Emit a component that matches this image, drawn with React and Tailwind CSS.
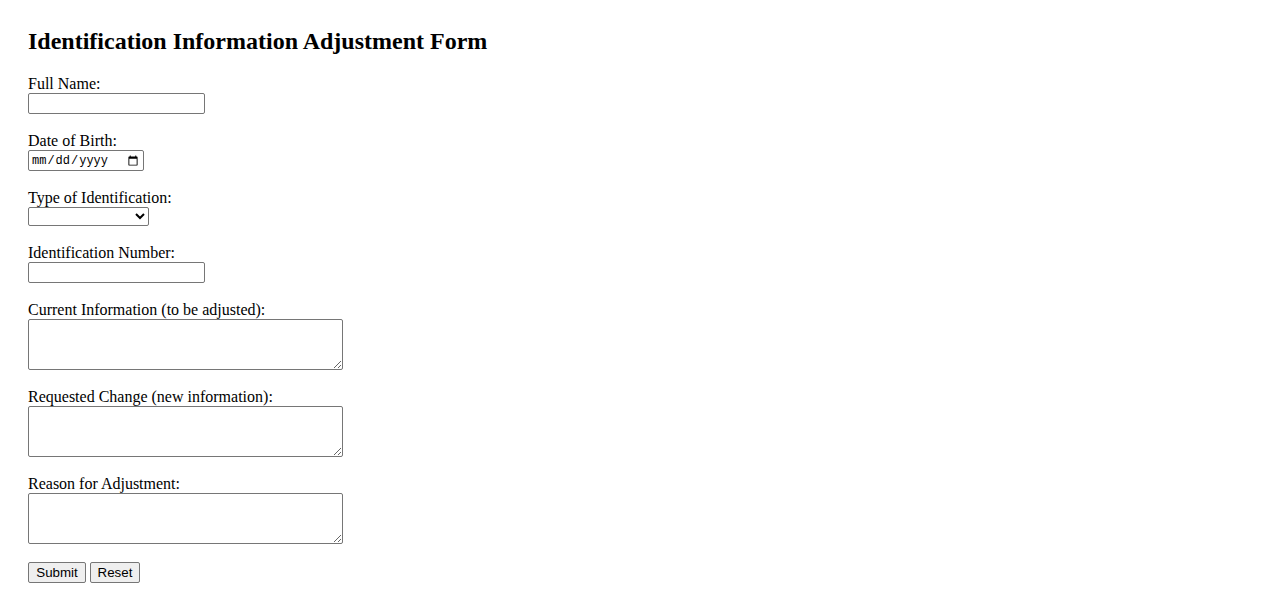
import React from 'react';

const fieldBox = 'block border border-[#767676] rounded-[2px] bg-white px-[2px] text-[13.33px] font-["Liberation_Sans",Arial,sans-serif]';
const btn = 'h-[21px] border border-[#767676] rounded-[2px] bg-[#efefef] text-[13.33px] leading-[15px] text-center font-["Liberation_Sans",Arial,sans-serif]';

function Field({ label, children }) {
  return (
    <div className="mb-[18px]">
      <label className="block leading-[18px]">{label}</label>
      {children}
    </div>
  );
}

export default function App() {
  return (
    <div className="min-h-screen bg-white text-black px-[28px] pt-[28px] pb-[18px] text-[16px] font-['Liberation_Serif','Times_New_Roman',serif]">
      <h2 className="text-[24px] font-bold leading-[27px] mb-[20px]">Identification Information Adjustment Form</h2>
      <form onSubmit={(e) => e.preventDefault()}>
        <Field label="Full Name:">
          <input type="text" className={`${fieldBox} w-[177px] h-[21px]`} />
        </Field>
        <Field label="Date of Birth:">
          <input type="date" className={`${fieldBox} w-[116px] h-[21px] !font-['Liberation_Mono',monospace] !text-[12px]`} />
        </Field>
        <Field label="Type of Identification:">
          <select className={`${fieldBox} w-[121px] h-[19px] px-0`}>
            <option value=""></option>
            <option value="passport">Passport</option>
            <option value="license">Driver's License</option>
            <option value="national">National ID</option>
          </select>
        </Field>
        <Field label="Identification Number:">
          <input type="text" className={`${fieldBox} w-[177px] h-[21px]`} />
        </Field>
        <Field label="Current Information (to be adjusted):">
          <textarea className={`${fieldBox} w-[315px] h-[51px] !font-['Liberation_Mono',monospace]`} />
        </Field>
        <Field label="Requested Change (new information):">
          <textarea className={`${fieldBox} w-[315px] h-[51px] !font-['Liberation_Mono',monospace]`} />
        </Field>
        <Field label="Reason for Adjustment:">
          <textarea className={`${fieldBox} w-[315px] h-[51px] !font-['Liberation_Mono',monospace]`} />
        </Field>
        <div className="flex gap-[4px]">
          <button type="submit" className={`${btn} w-[58px]`}>Submit</button>
          <button type="reset" className={`${btn} w-[50px]`}>Reset</button>
        </div>
      </form>
    </div>
  );
}
